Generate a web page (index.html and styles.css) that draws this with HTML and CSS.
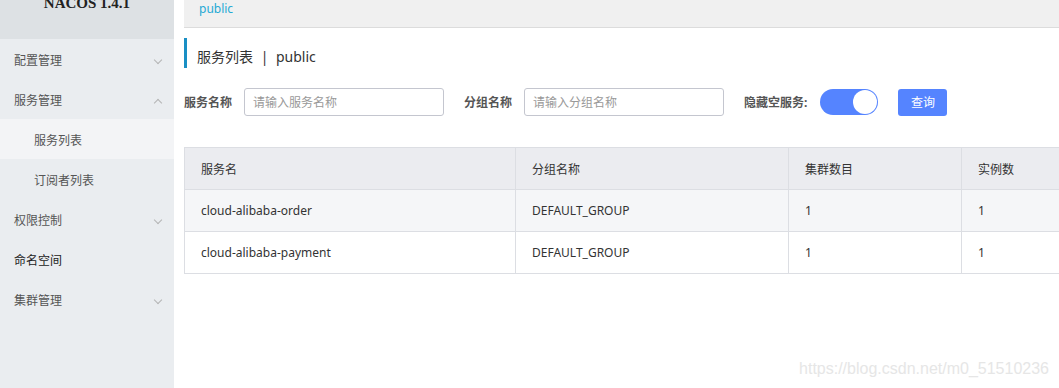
FILE: index.html
```html
<!DOCTYPE html>
<html>

<head>
    <title>Nacos</title>
    <link rel="stylesheet" href="styles.css">
</head>

<body>
    <div class="sidebar">
        <div class="logo"><span>NACOS 1.4.1</span></div>
        <div class="menu-item">配置管理<span class="arrow down"></span></div>
        <div class="menu-item">服务管理<span class="arrow up"></span></div>
        <div class="menu-item sub active">服务列表</div>
        <div class="menu-item sub">订阅者列表</div>
        <div class="menu-item">权限控制<span class="arrow down"></span></div>
        <div class="menu-item dark">命名空间</div>
        <div class="menu-item">集群管理<span class="arrow down"></span></div>
    </div>

    <div class="main">
        <div class="ns-bar"><a class="ns-link">public</a></div>

        <div class="page-title">服务列表 <span class="sep">|</span> public</div>

        <div class="search">
            <label>服务名称</label>
            <input type="text" placeholder="请输入服务名称">
            <label>分组名称</label>
            <input type="text" placeholder="请输入分组名称">
            <label>隐藏空服务:</label>
            <span class="switch"><span class="knob"></span></span>
            <button class="query">查询</button>
        </div>

        <table class="list">
            <tr>
                <th class="c1">服务名</th>
                <th class="c2">分组名称</th>
                <th class="c3">集群数目</th>
                <th class="c4">实例数</th>
            </tr>
            <tr class="hover">
                <td>cloud-alibaba-order</td>
                <td>DEFAULT_GROUP</td>
                <td>1</td>
                <td>1</td>
            </tr>
            <tr>
                <td>cloud-alibaba-payment</td>
                <td>DEFAULT_GROUP</td>
                <td>1</td>
                <td>1</td>
            </tr>
        </table>
    </div>

    <div class="watermark">https://blog.csdn.net/m0_51510236</div>
</body>

</html>
```

FILE: styles.css
```css
body {
    margin: 0;
    display: flex;
    height: 388px;
    overflow: hidden;
    font-family: "Noto Sans", "Noto Sans CJK SC", sans-serif;
    font-size: 12px;
    color: #333;
    background-color: #fff;
}

.sidebar {
    width: 174px;
    flex-shrink: 0;
    background-color: #eaedf0;
}

.logo {
    height: 39px;
    overflow: hidden;
    background-color: #dde1e4;
    text-align: center;
    font-family: "Liberation Serif", serif;
    font-weight: bold;
    font-size: 15px;
    color: #222;
}

.logo span {
    display: block;
    margin-top: -6px;
    line-height: 18px;
}

.menu-item {
    height: 40px;
    box-sizing: border-box;
    padding-top: 5px;
    line-height: 34px;
    padding-left: 14px;
    color: #555;
    position: relative;
}

.menu-item.sub {
    padding-left: 34px;
}

.menu-item.active {
    background-color: #f3f4f6;
}

.menu-item.dark {
    color: #222;
}

.arrow {
    position: absolute;
    right: 13px;
    top: 18px;
    width: 5px;
    height: 5px;
    border-right: 1px solid #b5b5b5;
    border-bottom: 1px solid #b5b5b5;
    transform: rotate(45deg);
}

.arrow.up {
    top: 21px;
    transform: rotate(-135deg);
}

.main {
    flex: 1;
    padding-left: 10px;
    overflow: hidden;
}

.ns-bar {
    height: 27px;
    line-height: 18px;
    background-color: #f0f0f0;
    border-bottom: 1px solid #dcdcdc;
    padding-left: 15px;
}

.ns-link {
    color: #25a9d4;
}

.page-title {
    margin-top: 10px;
    height: 30px;
    border-left: 3px solid #1a8fc4;
    padding-left: 10px;
    padding-top: 8px;
    box-sizing: border-box;
    line-height: 22px;
    font-size: 14px;
    color: #333;
}

.page-title .sep {
    margin: 0 4px;
}

.search {
    display: flex;
    align-items: center;
    margin-top: 20px;
    height: 28px;
}

.search label {
    font-weight: bold;
    color: #555;
    margin-right: 12px;
}

.search input {
    width: 200px;
    height: 28px;
    box-sizing: border-box;
    border: 1px solid #c4c6cf;
    border-radius: 3px;
    padding: 0 8px;
    font-family: "Noto Sans", "Noto Sans CJK SC", sans-serif;
    font-size: 12px;
    margin-right: 20px;
}

.search input::placeholder {
    color: #999;
}

.switch {
    width: 58px;
    height: 26px;
    border-radius: 13px;
    background-color: #5584ff;
    position: relative;
    margin-left: 1px;
    margin-right: 20px;
}

.knob {
    position: absolute;
    right: 1px;
    top: 1px;
    width: 24px;
    height: 24px;
    border-radius: 50%;
    background-color: #fff;
}

.query {
    width: 49px;
    height: 27px;
    border: none;
    border-radius: 3px;
    background-color: #5584ff;
    color: #fff;
    font-family: "Noto Sans", "Noto Sans CJK SC", sans-serif;
    font-size: 12px;
    padding: 0;
}

.list {
    margin-top: 31px;
    border-collapse: collapse;
    width: 960px;
    table-layout: fixed;
}

.list th,
.list td {
    border: 1px solid #dcdee3;
    height: 41px;
    padding: 0 16px;
    text-align: left;
    font-weight: normal;
    color: #333;
}

.list th {
    background-color: #ebecf0;
}

.list .c1 { width: 298px; }
.list .c2 { width: 240px; }
.list .c3 { width: 140px; }

.list tr.hover td {
    background-color: #f5f6f8;
}

.watermark {
    position: absolute;
    right: 10px;
    bottom: 10px;
    font-family: "Liberation Sans", sans-serif;
    font-size: 16px;
    color: #e6e6e6;
}
```
